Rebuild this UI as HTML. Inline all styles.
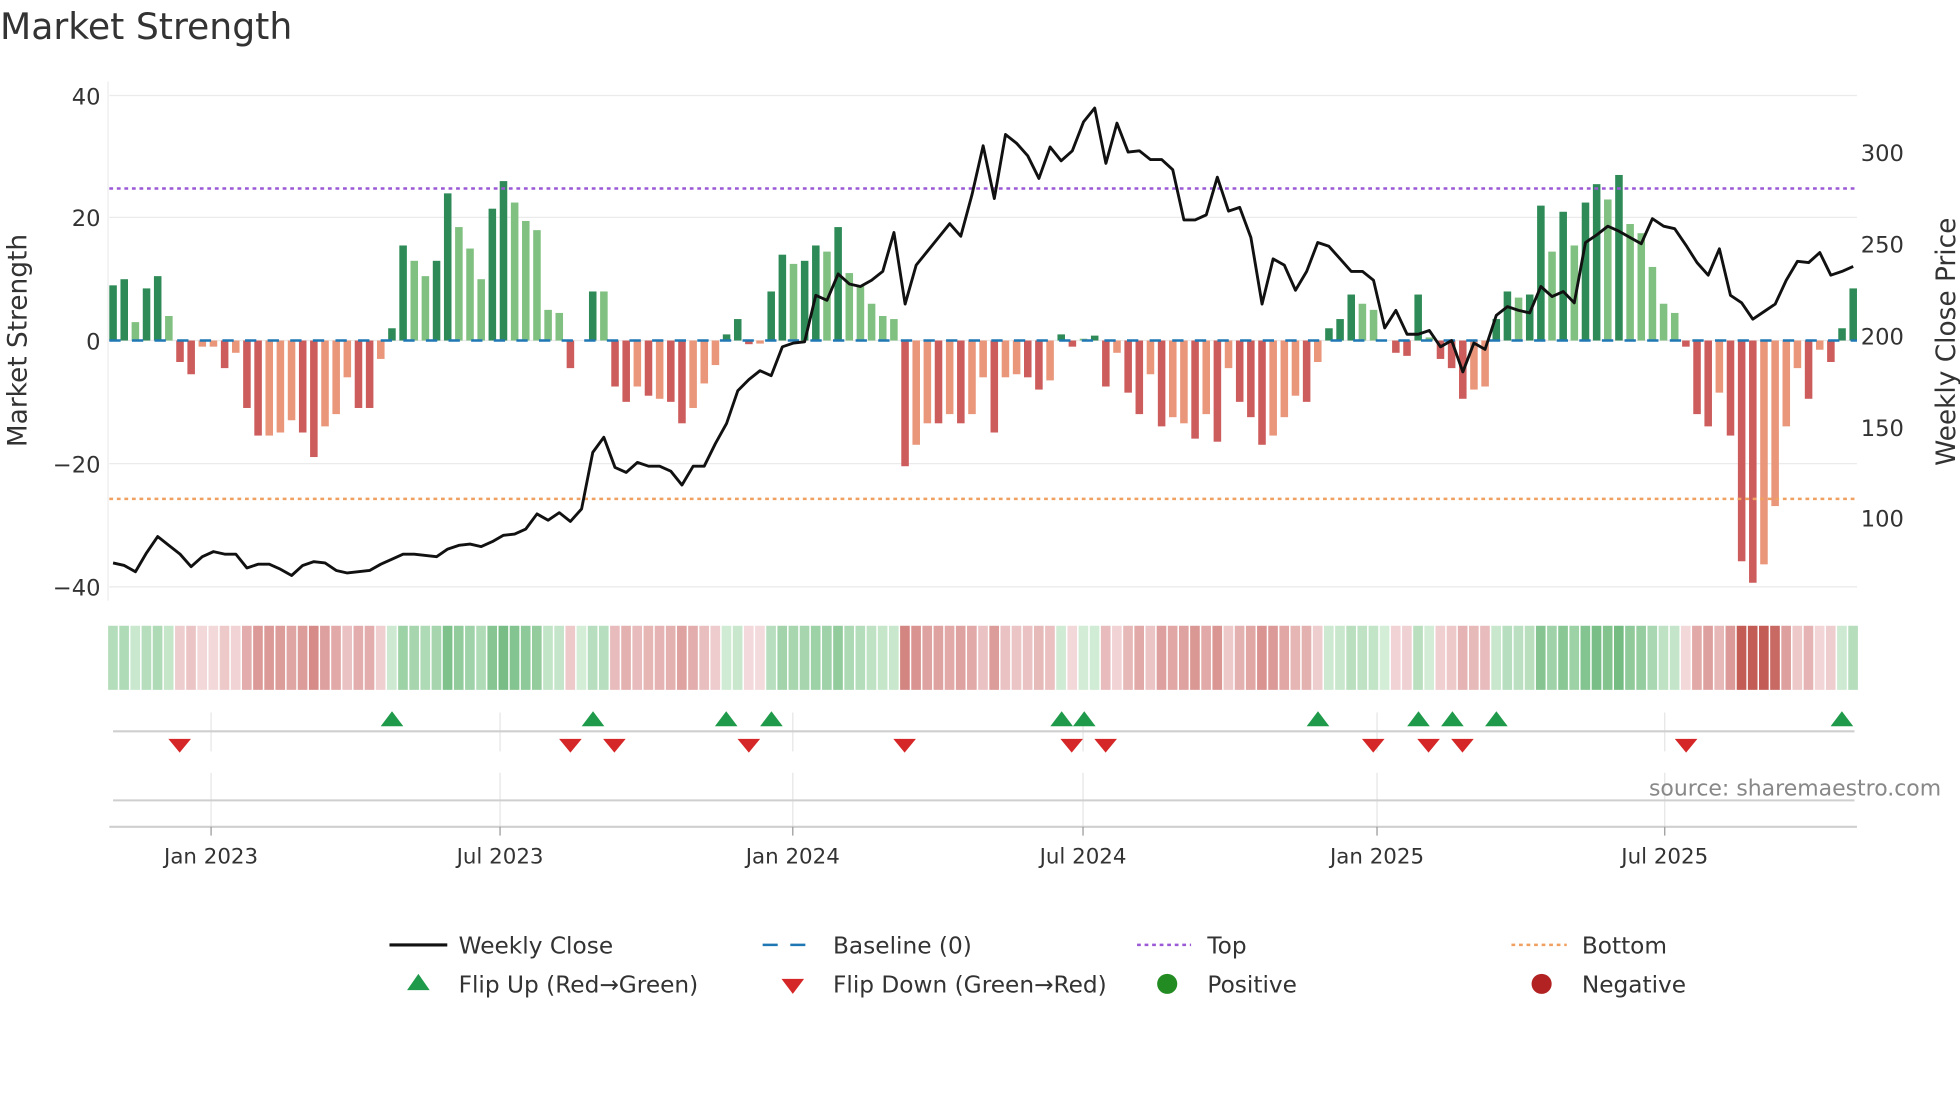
<!DOCTYPE html>
<html><head><meta charset="utf-8"><style>
html,body{margin:0;padding:0;background:#fff;overflow:hidden}
svg{display:block}
text{font-family:"DejaVu Sans","Liberation Sans",sans-serif;fill:#333}
</style></head><body>
<svg id="s" width="1960" height="1102" viewBox="0 0 1560 877" preserveAspectRatio="none" xmlns="http://www.w3.org/2000/svg">
<text x="0" y="31" font-size="28.8">Market Strength</text>
<g id="grid" stroke="#ebebeb" stroke-width="1">
<line x1="87" y1="76" x2="1478" y2="76"/><line x1="87" y1="173" x2="1478" y2="173"/><line x1="87" y1="271" x2="1478" y2="271"/><line x1="87" y1="369" x2="1478" y2="369"/><line x1="87" y1="467" x2="1478" y2="467"/>
<line x1="86" y1="65" x2="86" y2="478"/>
</g>
<g font-size="18" text-anchor="end">
<text x="80" y="83">40</text><text x="80" y="180">20</text><text x="80" y="278">0</text><text x="80" y="376">−20</text><text x="80" y="474">−40</text>
</g>
<g font-size="18">
<text x="1481" y="128">300</text><text x="1481" y="201">250</text><text x="1481" y="274">200</text><text x="1481" y="347">150</text><text x="1481" y="419">100</text>
</g>
<text transform="translate(21,271) rotate(-90)" font-size="21" text-anchor="middle">Market Strength</text>
<text transform="translate(1556,272) rotate(-90)" font-size="21" text-anchor="middle">Weekly Close Price</text>
<g id="bars"></g>
<line x1="87" y1="150" x2="1478" y2="150" stroke="#9b59d6" stroke-width="2" stroke-dasharray="3,3"/>
<line x1="87" y1="397" x2="1478" y2="397" stroke="#f0a060" stroke-width="2" stroke-dasharray="3,3"/>
<g id="heat"></g>
<g stroke="#e6e6e6" stroke-width="1">
<line x1="168" y1="567" x2="168" y2="598"/><line x1="398" y1="567" x2="398" y2="598"/><line x1="631" y1="567" x2="631" y2="598"/><line x1="862" y1="567" x2="862" y2="598"/><line x1="1096" y1="567" x2="1096" y2="598"/><line x1="1325" y1="567" x2="1325" y2="598"/>
<line x1="168" y1="615" x2="168" y2="658"/><line x1="398" y1="615" x2="398" y2="658"/><line x1="631" y1="615" x2="631" y2="658"/><line x1="862" y1="615" x2="862" y2="658"/><line x1="1096" y1="615" x2="1096" y2="658"/><line x1="1325" y1="615" x2="1325" y2="658"/>
</g>
<line x1="90" y1="582" x2="1476" y2="582" stroke="#cfcfcf" stroke-width="1.6"/>
<line x1="90" y1="637" x2="1476" y2="637" stroke="#cfcfcf" stroke-width="1.6"/>
<line x1="87" y1="658" x2="1478" y2="658" stroke="#cfcfcf" stroke-width="1.6"/>
<g stroke="#999" stroke-width="1"><line x1="168" y1="658" x2="168" y2="665"/><line x1="398" y1="658" x2="398" y2="665"/><line x1="631" y1="658" x2="631" y2="665"/><line x1="862" y1="658" x2="862" y2="665"/><line x1="1096" y1="658" x2="1096" y2="665"/><line x1="1325" y1="658" x2="1325" y2="665"/></g>
<g id="marks"></g>
<text x="1545" y="633" font-size="17.5" text-anchor="end" style="fill:#888">source: sharemaestro.com</text>
<g font-size="17" text-anchor="middle">
<text x="168" y="687">Jan 2023</text><text x="398" y="687">Jul 2023</text><text x="631" y="687">Jan 2024</text><text x="862" y="687">Jul 2024</text><text x="1096" y="687">Jan 2025</text><text x="1325" y="687">Jul 2025</text>
</g>
<g font-size="18.5">
<line x1="310" y1="752" x2="356" y2="752" stroke="#111" stroke-width="2.5"/><text x="365" y="759">Weekly Close</text>
<line x1="607" y1="752" x2="650" y2="752" stroke="#1f77b4" stroke-width="2" stroke-dasharray="12,10"/><text x="663" y="759">Baseline (0)</text>
<line x1="905" y1="752" x2="948" y2="752" stroke="#9b59d6" stroke-width="2" stroke-dasharray="3,3"/><text x="961" y="759">Top</text>
<line x1="1203" y1="752" x2="1247" y2="752" stroke="#f0a060" stroke-width="2" stroke-dasharray="3,3"/><text x="1259" y="759">Bottom</text>
<polygon points="324,788 342,788 333,775" fill="#1f9a4a"/><text x="365" y="790">Flip Up (Red→Green)</text>
<polygon points="622,779 640,779 631,791" fill="#d62728"/><text x="663" y="790">Flip Down (Green→Red)</text>
<circle cx="929" cy="783" r="8" fill="#228b22"/><text x="961" y="790">Positive</text>
<circle cx="1227" cy="783" r="8" fill="#b22222"/><text x="1259" y="790">Negative</text>
</g>
<polyline id="price" fill="none" stroke="#111" stroke-width="2.3" stroke-linejoin="round"/>
</svg>
<script>
var NS="http://www.w3.org/2000/svg";
var V=[[9,1],[10,1],[3,0],[8.5,1],[10.5,1],[4,0],[-3.5,1],[-5.5,1],[-1,0],[-1,0],[-4.5,1],[-2,0],[-11,1],[-15.5,1],[-15.5,0],[-15,0],[-13,0],[-15,1],[-19,1],[-14,0],[-12,0],[-6,0],[-11,1],[-11,1],[-3,0],[2,1],[15.5,1],[13,0],[10.5,0],[13,1],[24,1],[18.5,0],[15,0],[10,0],[21.5,1],[26,1],[22.5,0],[19.5,0],[18,0],[5,0],[4.5,0],[-4.5,1],[0,0],[8,1],[8,0],[-7.5,1],[-10,1],[-7.5,0],[-9,1],[-9.5,0],[-10,1],[-13.5,1],[-11,0],[-7,0],[-4,0],[1,1],[3.5,1],[-0.6,1],[-0.5,0],[8,1],[14,1],[12.5,0],[13,1],[15.5,1],[14.5,0],[18.5,1],[11,0],[9,0],[6,0],[4,0],[3.5,0],[-20.5,1],[-17,0],[-13.5,0],[-13.5,1],[-12,0],[-13.5,1],[-12,0],[-6,0],[-15,1],[-6,0],[-5.5,0],[-6,1],[-8,1],[-6.5,0],[1,1],[-1,1],[0.3,0],[0.8,1],[-7.5,1],[-2,0],[-8.5,1],[-12,1],[-5.5,0],[-14,1],[-12.5,0],[-13.5,0],[-16,1],[-12,0],[-16.5,1],[-4.5,0],[-10,1],[-12.5,1],[-17,1],[-15.5,0],[-12.5,0],[-9,0],[-10,1],[-3.5,0],[2,1],[3.5,1],[7.5,1],[6,0],[5,0],[0,0],[-2,1],[-2.5,1],[7.5,1],[0.5,0],[-3,1],[-4.5,1],[-9.5,1],[-8,0],[-7.5,0],[3.5,1],[8,1],[7,0],[7.5,1],[22,1],[14.5,0],[21,1],[15.5,0],[22.5,1],[25.5,1],[23,0],[27,1],[19,0],[17.5,0],[12,0],[6,0],[4.5,0],[-1,1],[-12,1],[-14,1],[-8.5,0],[-15.5,1],[-36,1],[-39.5,1],[-36.5,0],[-27,0],[-14,0],[-4.5,0],[-9.5,1],[-1.5,0],[-3.5,1],[2,1],[8.5,1]];
var n=V.length, x0=90, dx=(1475-90)/(n-1);
var bars=document.getElementById('bars'), heat=document.getElementById('heat');
function el(t,a,p){var e=document.createElementNS(NS,t);for(var k in a)e.setAttribute(k,a[k]);p.appendChild(e);return e;}
function mix(a,b,t){return 'rgb('+a.map(function(v,i){return Math.round(v+(b[i]-v)*t)}).join(',')+')';}
for(var i=0;i<n;i++){
 var v=V[i][0],d=V[i][1],x=x0+i*dx,y0=271,h=Math.abs(v)*4.88;
 var c=v>=0?(d?'#2e8b57':'#80c080'):(d?'#cd5c5c':'#e9967a');
 if(h>0.2) el('rect',{x:x-3,y:v>=0?y0-h:y0,width:6,height:h,fill:c},bars);
 var t=Math.min(1,Math.abs(v)/30);
 var hc=v>=0?mix([212,237,215],[105,182,120],t):mix([244,220,222],[196,92,86],t);
 el('rect',{x:x-dx/2+0.5,y:498,width:dx-1.2,height:51,fill:hc},heat);
}
el('line',{x1:87,y1:271,x2:1478,y2:271,stroke:'#1f77b4','stroke-width':2,'stroke-dasharray':'9,9'},bars);
var P=[448,450,455,440,427,434,441,451,443,439,441,441,452,449,449,453,458,450,447,448,454,456,455,454,449,445,441,441,442,443,437,434,433,435,431,426,425,421,409,414,408,415,405,360,348,372,376,368,371,371,375,386,371,371,353,337,311,302,295,299,276,273,272,235,239,218,226,228,223,216,185,242,211,200,189,178,188,155,116,158,107,114,124,142,117,128,120,97,86,130,98,121,120,127,127,135,175,175,171,141,168,165,189,242,206,211,231,216,193,196,206,216,216,223,261,247,266,266,263,276,271,296,273,278,251,244,247,249,228,236,232,241,193,187,180,184,189,194,174,180,182,195,209,219,198,235,241,254,248,242,223,208,209,201,219,216,212];
var pts=[];var m=P.length;for(var j=0;j<m;j++)pts.push((x0+j*(1385/(m-1))).toFixed(1)+','+P[j]);
document.getElementById('price').setAttribute('points',pts.join(' '));
var marks=document.getElementById('marks');
[312,472,578,614,845,863,1049,1129,1156,1191,1466].forEach(function(x){el('polygon',{points:(x-9)+',578 '+(x+9)+',578 '+x+',566',fill:'#1f9a4a'},marks);});
[143,454,489,596,720,853,880,1093,1137,1164,1342].forEach(function(x){el('polygon',{points:(x-9)+',588 '+(x+9)+',588 '+x+',599',fill:'#d62728'},marks);});
</script>
</body></html>
